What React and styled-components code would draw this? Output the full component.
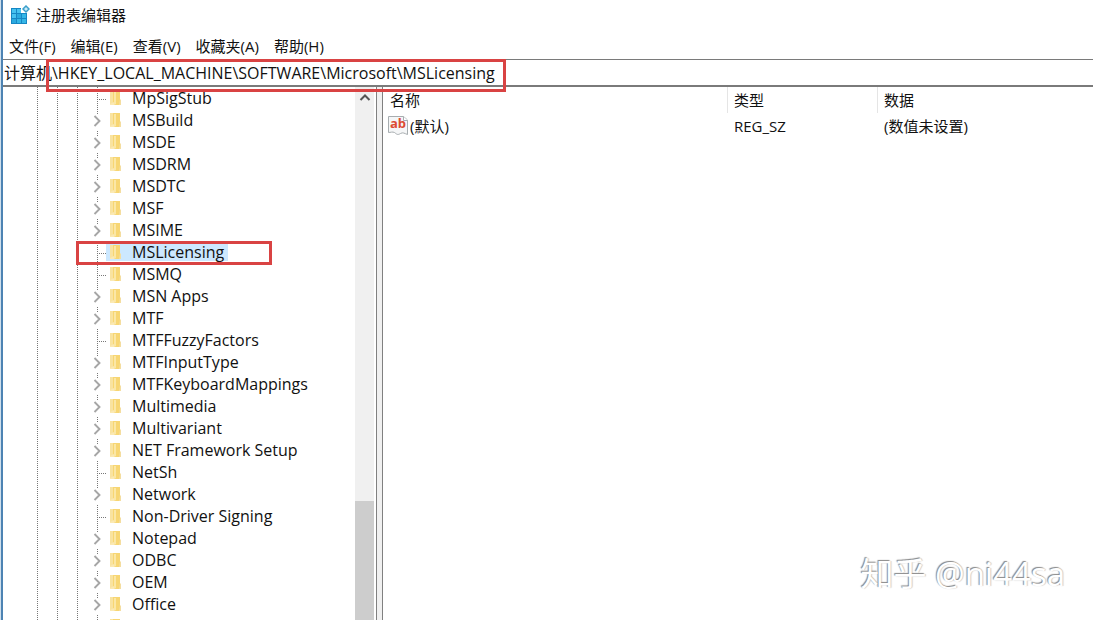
import React, { useState } from 'react';
import styled, { createGlobalStyle } from 'styled-components';

const GlobalStyle = createGlobalStyle`
    * {
        box-sizing: border-box;
    }

    body {
        margin: 0;
        background: #cfdfec;
        color: #111;
        font-family: "Open Sans", "Noto Sans CJK SC", sans-serif;
        font-size: 15px;
        line-height: 22px;
    }

    button, input {
        font: inherit;
        color: inherit;
        background: none;
        border: none;
        padding: 0;
        margin: 0;
        outline: none;
    }
`;

const Window = styled.div`
    position: relative;
    display: flex;
    flex-direction: column;
    height: 100vh;
    margin-left: 1px;
    overflow: hidden;
    border-left: 2px solid #4d83b3;
    background: #fff;
`;

const TitleBar = styled.header`
    display: flex;
    align-items: center;
    gap: 6px;
    height: 30px;
    padding-left: 7px;
`;

const Title = styled.h1`
    margin: 0;
    font-size: 15px;
    font-weight: 400;
`;

const MenuBar = styled.nav`
    display: flex;
    align-items: center;
    gap: 15px;
    height: 29px;
    padding: 2px 0 0 6px;
`;

const MenuButton = styled.button`
    white-space: nowrap;
`;

const AddressBar = styled.div`
    position: relative;
    display: flex;
    height: 28px;
    flex-shrink: 0;
    border-top: 1px solid #7a7a7a;
    border-bottom: 2px solid #7a7a7a;
`;

const AddressInput = styled.input`
    flex: 1;
    min-width: 0;
    padding-left: 1px;
    font-size: 16px;
`;

const Highlight = styled.div`
    position: absolute;
    z-index: 2;
    border: 3px solid #d94343;
    pointer-events: none;
`;

const AddressHighlight = styled(Highlight)`
    left: 43px;
    top: -1px;
    width: 460px;
    height: 33px;
`;

const KeyHighlight = styled(Highlight)`
    left: 73px;
    top: 0;
    width: 196px;
    height: 24px;
`;

const Panes = styled.main`
    display: flex;
    flex: 1;
    min-height: 0;
`;

const TreePane = styled.div`
    flex: 0 0 352px;
    overflow: hidden;
    font-size: 16px;
`;

const Tree = styled.ul`
    list-style: none;
    margin: 0;
    padding: 0;
`;

const TreeRow = styled.li`
    position: relative;
    display: flex;
    align-items: stretch;
    height: 22px;
    padding-left: 34px;
`;

const dotsDown = 'repeating-linear-gradient(to bottom, #777 0 1px, transparent 1px 2px)';
const dotsAcross = 'repeating-linear-gradient(to right, #777 0 1px, transparent 1px 2px)';

const Guide = styled.span`
    width: 20px;
    background: ${dotsDown} 0 0 / 1px 100% no-repeat;
`;

const Joint = styled.span`
    width: 9px;
    background:
        ${dotsAcross} 0 12px / 9px 1px no-repeat,
        ${dotsDown} 0 0 / 1px 100% no-repeat;
`;

const Toggle = styled.button`
    display: flex;
    align-items: center;
    width: 15px;
    margin-left: -6px;
    background: ${dotsDown} 6px 0 / 1px 5px no-repeat;
`;

const KeyLabel = styled.button`
    display: flex;
    align-items: center;
    height: 18px;
    align-self: center;
    padding: 0 4px 0 3px;
    gap: 8px;
    white-space: nowrap;
    background: ${({ $selected }) => ($selected ? '#cce8ff' : 'transparent')};
`;

const ScrollBar = styled.div`
    display: flex;
    flex-direction: column;
    width: 19px;
    background: #f0f0f0;
`;

const ScrollUp = styled.button`
    display: flex;
    justify-content: center;
    padding-top: 6px;
    flex: 31;
`;

const ScrollThumb = styled.div`
    flex: 9;
    background: #cdcdcd;
`;

const Splitter = styled.div`
    width: 7px;
    margin-left: 2px;
    border: solid #808080;
    border-width: 0 1px;
    background: #f0f0f0;
    cursor: col-resize;
`;

const ValuePane = styled.div`
    flex: 1;
    min-width: 0;
    padding-left: 1px;
`;

const ValueTable = styled.table`
    width: 100%;
    table-layout: fixed;
    border-collapse: collapse;
    text-align: left;
`;

const HeadCell = styled.th`
    width: ${({ $width }) => $width || 'auto'};
    height: 26px;
    padding: 0 6px;
    font-weight: 400;
    background: linear-gradient(#e5e5e5, #e5e5e5) 100% 0 / ${({ $width }) => ($width ? '1px' : '0')} 100% no-repeat;
`;

const Cell = styled.td`
    height: 25px;
    padding: 0 6px;
`;

const ValueName = styled.span`
    display: flex;
    align-items: center;
    gap: 2px;
    margin-left: -2px;
`;

const Watermark = styled.div`
    position: absolute;
    right: 28px;
    bottom: 24px;
    color: #fff;
    font-size: 33px;
    line-height: 44px;
    font-family: "Open Sans", "Noto Sans CJK SC", sans-serif;
    text-shadow: -1px -1px 1px #888, 1px 0 1px #ccc;
    pointer-events: none;
`;

const RegistryIcon = () => (
    <svg width="20" height="20" viewBox="0 0 20 20" aria-hidden="true">
        <path d="M1 3h10v5h6v11H1z" fill="#1687c4" />
        <g fill="#45c2f0">
            <path d="M2 4h4v4H2zM7 4h4v4H7zM2 9h4v4H2z" />
            <path d="M7 9h4v4H7zM2 14h4v4H2z" fill="#2aa9df" />
            <path d="M12 9h4v4h-4zM7 14h4v4H7zM12 14h4v4h-4z" fill="#35b6e6" />
        </g>
        <path d="M16 1l3 3-3 3-3-3z" fill="#c8ecfa" stroke="#3c9fca" strokeWidth="1.5" />
    </svg>
);

const FolderIcon = () => (
    <svg width="15" height="16" viewBox="0 0 15 16" aria-hidden="true">
        <path d="M1 1h7v13H1z" fill="#f9e3a0" />
        <path d="M4 1h7v12l1 2H4z" fill="#f7d673" />
        <path d="M1 14l4-2v3H1z" fill="#fbe9b4" />
        <path d="M5 2h2v12l-2 1z" fill="#fbe7a6" />
        <path d="M11 9l1 1v5h-2z" fill="#f4dda0" />
    </svg>
);

const ChevronIcon = () => (
    <svg width="11" height="12" viewBox="0 0 11 12" style={{ marginLeft: 2, marginTop: 2 }} aria-hidden="true">
        <path d="M1.500 1l5 5-5 5" fill="none" stroke="#a6a6a6" strokeWidth="1.9" />
    </svg>
);

const UpIcon = () => (
    <svg width="12" height="9" viewBox="0 0 12 9" aria-hidden="true">
        <path d="M1.500 7L6 2.500 10.500 7" fill="none" stroke="#555" strokeWidth="2" />
    </svg>
);

const StringIcon = () => (
    <svg width="20" height="21" viewBox="0 0 20 21" aria-hidden="true">
        <path d="M.5 1.500h15l4 3.500v14.500c-3-1-4.500-2.500-7-1-3 2-4 .5-6-1-2-1-4 0-6 0z" fill="#f5f6f7" stroke="#a7adb0" />
        <path d="M15.500 1.500v4h4" fill="#fff" stroke="#a7adb0" />
        <text x="2" y="13" fontSize="13" fontWeight="700" fill="#dc4b32" fontFamily="Open Sans">ab</text>
    </svg>
);

const menus = ['文件(F)', '编辑(E)', '查看(V)', '收藏夹(A)', '帮助(H)'];

const keys = [
    { name: 'MpSigStub', leaf: true },
    { name: 'MSBuild' },
    { name: 'MSDE' },
    { name: 'MSDRM' },
    { name: 'MSDTC' },
    { name: 'MSF' },
    { name: 'MSIME' },
    { name: 'MSLicensing', leaf: true, marked: true },
    { name: 'MSMQ', leaf: true },
    { name: 'MSN Apps' },
    { name: 'MTF' },
    { name: 'MTFFuzzyFactors', leaf: true },
    { name: 'MTFInputType' },
    { name: 'MTFKeyboardMappings' },
    { name: 'Multimedia' },
    { name: 'Multivariant' },
    { name: 'NET Framework Setup' },
    { name: 'NetSh', leaf: true },
    { name: 'Network' },
    { name: 'Non-Driver Signing', leaf: true },
    { name: 'Notepad' },
    { name: 'ODBC' },
    { name: 'OEM' },
    { name: 'Office' },
    { name: '', leaf: true },
];

const App = () => {
    const [path, setPath] = useState('计算机\\HKEY_LOCAL_MACHINE\\SOFTWARE\\Microsoft\\MSLicensing');
    const [selected, setSelected] = useState('MSLicensing');

    return (
        <>
            <GlobalStyle />
            <Window>
                <TitleBar>
                    <RegistryIcon />
                    <Title>注册表编辑器</Title>
                </TitleBar>

                <MenuBar>
                    {menus.map((menu) => (
                        <MenuButton key={menu} type="button">{menu}</MenuButton>
                    ))}
                </MenuBar>

                <AddressBar>
                    <AddressInput
                        aria-label="地址"
                        value={path}
                        onChange={(e) => setPath(e.target.value)}
                    />
                    <AddressHighlight />
                </AddressBar>

                <Panes>
                    <TreePane>
                        <Tree>
                            {keys.map(({ name, leaf, marked }) => (
                                <TreeRow key={name}>
                                    <Guide />
                                    <Guide />
                                    <Guide />
                                    {leaf ? <Joint /> : (
                                        <Toggle type="button" aria-label={`展开 ${name}`}>
                                            <ChevronIcon />
                                        </Toggle>
                                    )}
                                    <KeyLabel
                                        type="button"
                                        $selected={name === selected}
                                        onClick={() => setSelected(name)}
                                    >
                                        <FolderIcon />
                                        {name}
                                    </KeyLabel>
                                    {marked && <KeyHighlight />}
                                </TreeRow>
                            ))}
                        </Tree>
                    </TreePane>

                    <ScrollBar>
                        <ScrollUp type="button" aria-label="向上滚动"><UpIcon /></ScrollUp>
                        <ScrollThumb />
                    </ScrollBar>
                    <Splitter />

                    <ValuePane>
                        <ValueTable>
                            <thead>
                                <tr>
                                    <HeadCell $width="344px">名称</HeadCell>
                                    <HeadCell $width="150px">类型</HeadCell>
                                    <HeadCell>数据</HeadCell>
                                </tr>
                            </thead>
                            <tbody>
                                <tr>
                                    <Cell><ValueName><StringIcon />(默认)</ValueName></Cell>
                                    <Cell>REG_SZ</Cell>
                                    <Cell>(数值未设置)</Cell>
                                </tr>
                            </tbody>
                        </ValueTable>
                    </ValuePane>
                </Panes>

                <Watermark>知乎 @ni44sa</Watermark>
            </Window>
        </>
    );
};

export default App;
